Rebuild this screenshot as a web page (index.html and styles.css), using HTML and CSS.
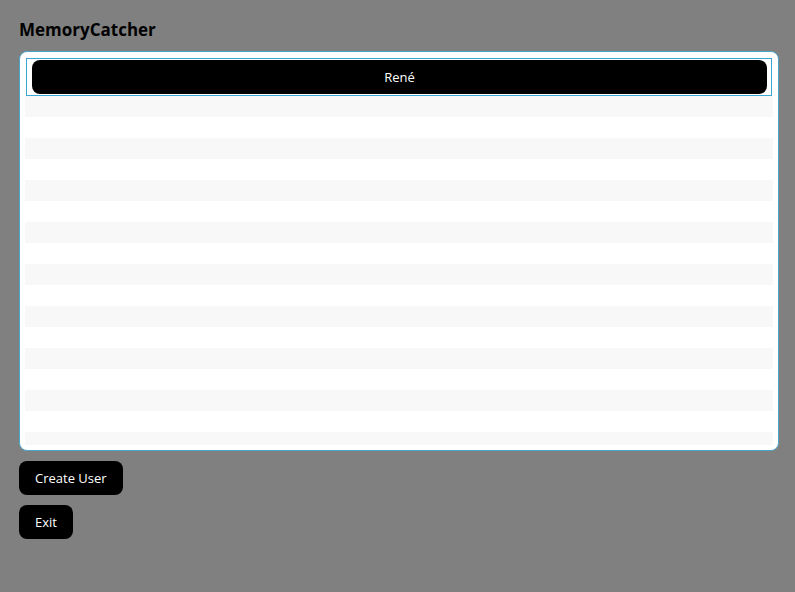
FILE: index.html
```html
<!DOCTYPE html>
<html>
<head>
<meta charset="utf-8">
<link rel="stylesheet" href="styles.css">
</head>
<body>
<div class="app">
  <h1 class="title">MemoryCatcher</h1>
  <div class="listbox">
    <div class="rows">
      <div class="row selected"><button class="user-btn">René</button></div>
      <div class="row stripe"></div>
      <div class="row"></div>
      <div class="row stripe"></div>
      <div class="row"></div>
      <div class="row stripe"></div>
      <div class="row"></div>
      <div class="row stripe"></div>
      <div class="row"></div>
      <div class="row stripe"></div>
      <div class="row"></div>
      <div class="row stripe"></div>
      <div class="row"></div>
      <div class="row stripe"></div>
      <div class="row"></div>
      <div class="row stripe"></div>
      <div class="row"></div>
      <div class="row stripe"></div>
    </div>
  </div>
  <div class="actions">
    <button class="btn">Create User</button>
    <button class="btn">Exit</button>
  </div>
</div>
</body>
</html>
```
FILE: styles.css
```css
html, body {
  margin: 0;
  padding: 0;
  background: #808080;
  font-family: "Open Sans", "Noto Sans", sans-serif;
}
.app {
  padding: 19px 16px 0 19px;
  display: flex;
  flex-direction: column;
}
.title {
  margin: 0;
  font-size: 17px;
  line-height: 22px;
  font-weight: 700;
  color: #000;
  height: 22px;
}
.listbox {
  margin-top: 10px;
  width: 760px;
  height: 400px;
  box-sizing: border-box;
  border: 1px solid #4aa6c8;
  border-radius: 8px;
  background: #fff;
  padding: 6px 5px 5px 5px;
  overflow: hidden;
}
.rows {
  height: 100%;
  overflow: hidden;
  display: flex;
  flex-direction: column;
}
.row {
  height: 21px;
  flex: 0 0 21px;
}
.stripe {
  background: #f8f8f8;
}
.row.selected {
  height: 38px;
  flex: 0 0 38px;
  box-sizing: border-box;
  margin-left: 1px;
  margin-right: 1px;
  border: 1px solid #3aa6d6;
  padding: 1px 4px 1px 5px;
  display: flex;
}
.user-btn {
  flex: 1;
  height: 34px;
  border: none;
  border-radius: 8px;
  background: #000;
  color: #fff;
  font-family: inherit;
  font-size: 13px;
  padding: 0;
  cursor: pointer;
}
.actions {
  margin-top: 10px;
  display: flex;
  flex-direction: column;
  align-items: flex-start;
  gap: 10px;
}
.btn {
  height: 34px;
  border: none;
  border-radius: 8px;
  background: #000;
  color: #fff;
  font-family: inherit;
  font-size: 13px;
  padding: 0 16px;
  cursor: pointer;
}
```
